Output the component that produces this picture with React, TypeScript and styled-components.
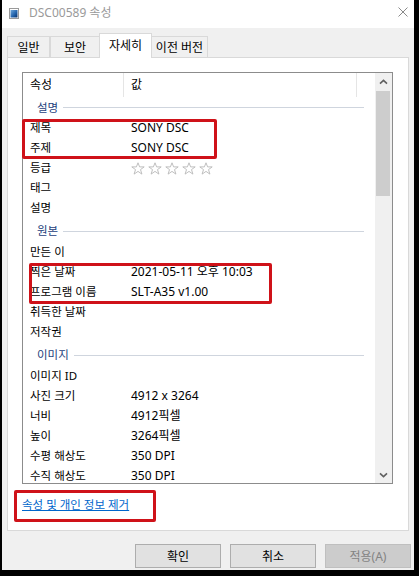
import { FunctionComponent } from "react";
import styled, { createGlobalStyle } from "styled-components";

type Item = [string, string];

type Group = {
  title: string;
  compact?: boolean;
  items: Item[];
};

const groups: Group[] = [
  {
    title: "설명",
    compact: true,
    items: [
      ["제목", "SONY DSC"],
      ["주제", "SONY DSC"],
      ["등급", "*stars"],
      ["태그", ""],
      ["설명", ""],
    ],
  },
  {
    title: "원본",
    items: [
      ["만든 이", ""],
      ["찍은 날짜", "2021-05-11 오후 10:03"],
      ["프로그램 이름", "SLT-A35 v1.00"],
      ["취득한 날짜", ""],
      ["저작권", ""],
    ],
  },
  {
    title: "이미지",
    items: [
      ["이미지 ID", ""],
      ["사진 크기", "4912 x 3264"],
      ["너비", "4912픽셀"],
      ["높이", "3264픽셀"],
      ["수평 해상도", "350 DPI"],
      ["수직 해상도", "350 DPI"],
    ],
  },
];

const tabs = ["일반", "보안", "자세히", "이전 버전"];
const tabWidths = [43, 50, 53, 57];

const GlobalStyle = createGlobalStyle`
  html, body {
    margin: 0;
    padding: 0;
    background: #000;
  }
  body {
    font-family: "Noto Sans", "Noto Sans CJK KR", sans-serif;
    font-size: 12px;
    color: #000;
  }
`;

const Star: FunctionComponent = () => (
  <svg width="14" height="13" viewBox="0 0 14 13">
    <path
      d="M7 0.8 L8.6 4.9 L13.2 4.9 L9.5 7.6 L10.9 12.1 L7 9.4 L3.1 12.1 L4.5 7.6 L0.8 4.9 L5.4 4.9 Z"
      fill="none"
      stroke="#b8b8b8"
      strokeWidth="0.9"
      strokeLinejoin="round"
    />
  </svg>
);

const Chevron: FunctionComponent<{ down?: boolean }> = ({ down }) => (
  <svg width="9" height="6" viewBox="0 0 9 6">
    <path
      d={down ? "M1 1.3 L4.5 4.6 L8 1.3" : "M1 4.7 L4.5 1.4 L8 4.7"}
      fill="none"
      stroke="#606060"
      strokeWidth="1.6"
    />
  </svg>
);

const FileIcon: FunctionComponent = () => (
  <svg width="10" height="11" viewBox="0 0 10 11">
    <defs>
      <linearGradient id="pic" x1="0" y1="0" x2="1" y2="1">
        <stop offset="0" stopColor="#6fa8dc" />
        <stop offset="0.6" stopColor="#1f5fa8" />
        <stop offset="1" stopColor="#0c2f66" />
      </linearGradient>
    </defs>
    <rect x="0.5" y="0.5" width="9" height="10" fill="#fff" stroke="#9a9a9a" />
    <rect x="1.5" y="2" width="7" height="7.5" fill="url(#pic)" />
  </svg>
);

export default function App() {
  return (
    <>
      <GlobalStyle />
      <Window>
        <TitleBar>
          <TitleLeft>
            <FileIcon />
            <TitleText>DSC00589 속성</TitleText>
          </TitleLeft>
          <CloseIcon viewBox="0 0 10 10">
            <path d="M0.5 0.5 L9.5 9.5 M9.5 0.5 L0.5 9.5" stroke="#8a8a8a" strokeWidth="1" />
          </CloseIcon>
        </TitleBar>

        <TabsRow>
          {tabs.map((t, i) => (
            <Tab key={t} $active={i === 2} style={{ width: tabWidths[i] }}>
              {t}
            </Tab>
          ))}
        </TabsRow>

        <TabPage>
          <ListBox>
            <ListContent>
              <Header>
                <HeaderCell>속성</HeaderCell>
                <HeaderCell>값</HeaderCell>
                <HeaderCell $last />
              </Header>
              {groups.map((g) => (
                <div key={g.title}>
                  <GroupRow $compact={g.compact}>
                    <GroupLabel>{g.title}</GroupLabel>
                    <GroupLine />
                  </GroupRow>
                  {g.items.map(([label, value]) => (
                    <Row key={label}>
                      <Label>{label}</Label>
                      {value === "*stars" ? (
                        <Stars>
                          {[0, 1, 2, 3, 4].map((s) => (
                            <Star key={s} />
                          ))}
                        </Stars>
                      ) : (
                        <Value>{value}</Value>
                      )}
                    </Row>
                  ))}
                </div>
              ))}
            </ListContent>
            <ScrollBar>
              <ScrollButton>
                <Chevron />
              </ScrollButton>
              <Thumb />
              <ScrollSpace />
              <ScrollButton>
                <Chevron down />
              </ScrollButton>
            </ScrollBar>
          </ListBox>
          <RemoveLink>속성 및 개인 정보 제거</RemoveLink>
        </TabPage>

        <ButtonRow>
          <DialogButton>확인</DialogButton>
          <DialogButton>취소</DialogButton>
          <DialogButton $disabled>적용(A)</DialogButton>
        </ButtonRow>

        <Highlight $left={20} $top={119} $width={195} $height={40} />
        <Highlight $left={27} $top={263} $width={243} $height={41} />
        <Highlight $left={12} $top={490} $width={142} $height={32} />
      </Window>
    </>
  );
}

const Window = styled.div`
  position: relative;
  margin-left: 2px;
  width: 412px;
  height: 570px;
  background: #f0f0f0;
  display: flex;
  flex-direction: column;
  overflow: hidden;
`;

const TitleBar = styled.div`
  height: 28px;
  background: #fff;
  display: flex;
  align-items: center;
  justify-content: space-between;
  padding: 0 6px 0 7px;
  box-sizing: border-box;
`;

const TitleLeft = styled.div`
  display: flex;
  align-items: center;
  gap: 10px;
  margin-top: -2px;
`;

const TitleText = styled.span`
  color: #9a9a9a;
  font-size: 12px;
  line-height: 16px;
`;

const CloseIcon = styled.svg`
  width: 10px;
  height: 10px;
  margin-top: -4px;
`;

const TabsRow = styled.div`
  margin-top: 5px;
  height: 24px;
  padding-left: 5px;
  display: flex;
  align-items: flex-end;
`;

const Tab = styled.div<{ $active?: boolean }>`
  box-sizing: border-box;
  height: ${({ $active }) => ($active ? "25px" : "21px")};
  margin-bottom: ${({ $active }) => ($active ? "-1px" : "0")};
  margin-left: ${({ $active }) => ($active ? "-1px" : "0")};
  margin-right: ${({ $active }) => ($active ? "-1px" : "0")};
  position: relative;
  z-index: ${({ $active }) => ($active ? 2 : 1)};
  background: ${({ $active }) => ($active ? "#fff" : "#f0f0f0")};
  border: 1px solid #d9d9d9;
  border-bottom: none;
  display: flex;
  align-items: center;
  justify-content: center;
  padding-bottom: ${({ $active }) => ($active ? "3px" : "0")};
  font-size: 12px;
  color: #000;
  & + & {
    border-left: ${({ $active }) => ($active ? "1px solid #d9d9d9" : "none")};
  }
`;

const TabPage = styled.div`
  position: relative;
  z-index: 1;
  margin: 0 5px;
  height: 474px;
  box-sizing: border-box;
  background: #fff;
  border: 1px solid #d9d9d9;
  padding: 14px 0 0 14px;
`;

const ListBox = styled.div`
  width: 371px;
  height: 412px;
  box-sizing: border-box;
  border: 1px solid #8c8c8c;
  display: flex;
  overflow: hidden;
`;

const ListContent = styled.div`
  flex: 1;
  overflow: hidden;
`;

const Header = styled.div`
  height: 24px;
  display: grid;
  grid-template-columns: 101px 233px 1fr;
`;

const HeaderCell = styled.div<{ $last?: boolean }>`
  padding-left: 7px;
  line-height: 24px;
  border-right: ${({ $last }) => ($last ? "none" : "1px solid #e5e5e5")};
`;

const GroupRow = styled.div<{ $compact?: boolean }>`
  height: ${({ $compact }) => ($compact ? "21px" : "24px")};
  padding-top: ${({ $compact }) => ($compact ? "0" : "2px")};
  box-sizing: border-box;
  display: flex;
  align-items: center;
  padding-left: 14px;
`;

const GroupLabel = styled.span`
  color: #1e3f7c;
  font-size: 11.5px;
  line-height: 16px;
`;

const GroupLine = styled.div`
  flex: 1;
  height: 1px;
  background: #cfd5de;
  margin: 0 11px 0 5px;
`;

const Row = styled.div`
  height: 20px;
  display: grid;
  grid-template-columns: 101px 1fr;
  align-items: center;
`;

const Label = styled.span`
  padding-left: 7px;
  font-size: 11.5px;
  line-height: 20px;
  white-space: nowrap;
`;

const Value = styled.span`
  padding-left: 7px;
  line-height: 20px;
  white-space: nowrap;
`;

const Stars = styled.div`
  padding-left: 7px;
  display: flex;
  gap: 3px;
  align-items: center;
  padding-top: 1px;
`;

const ScrollBar = styled.div`
  width: 17px;
  background: #f0f0f0;
  display: flex;
  flex-direction: column;
`;

const ScrollButton = styled.div`
  height: 17px;
  display: flex;
  align-items: center;
  justify-content: center;
`;

const Thumb = styled.div`
  margin: 1px 2px 0 1px;
  height: 105px;
  background: #cdcdcd;
`;

const ScrollSpace = styled.div`
  flex: 1;
`;

const RemoveLink = styled.a`
  display: inline-block;
  margin-top: 13px;
  color: #0066cc;
  font-size: 11.5px;
  text-decoration: underline;
  line-height: 16px;
  cursor: pointer;
`;

const ButtonRow = styled.div`
  margin-top: 13px;
  display: flex;
  justify-content: flex-end;
  gap: 9px;
  padding-right: 3px;
`;

const DialogButton = styled.div<{ $disabled?: boolean }>`
  width: 86px;
  height: 24px;
  box-sizing: border-box;
  border: 1px solid ${({ $disabled }) => ($disabled ? "#bfbfbf" : "#adadad")};
  background: ${({ $disabled }) => ($disabled ? "#cccccc" : "#e1e1e1")};
  color: ${({ $disabled }) => ($disabled ? "#838383" : "#000")};
  display: flex;
  align-items: center;
  justify-content: center;
  font-size: 12px;
`;

const Highlight = styled.div<{ $left: number; $top: number; $width: number; $height: number }>`
  position: absolute;
  z-index: 5;
  left: ${({ $left }) => $left}px;
  top: ${({ $top }) => $top}px;
  width: ${({ $width }) => $width}px;
  height: ${({ $height }) => $height}px;
  box-sizing: border-box;
  border: 3px solid #cf1219;
  border-radius: 2px;
  pointer-events: none;
`;
